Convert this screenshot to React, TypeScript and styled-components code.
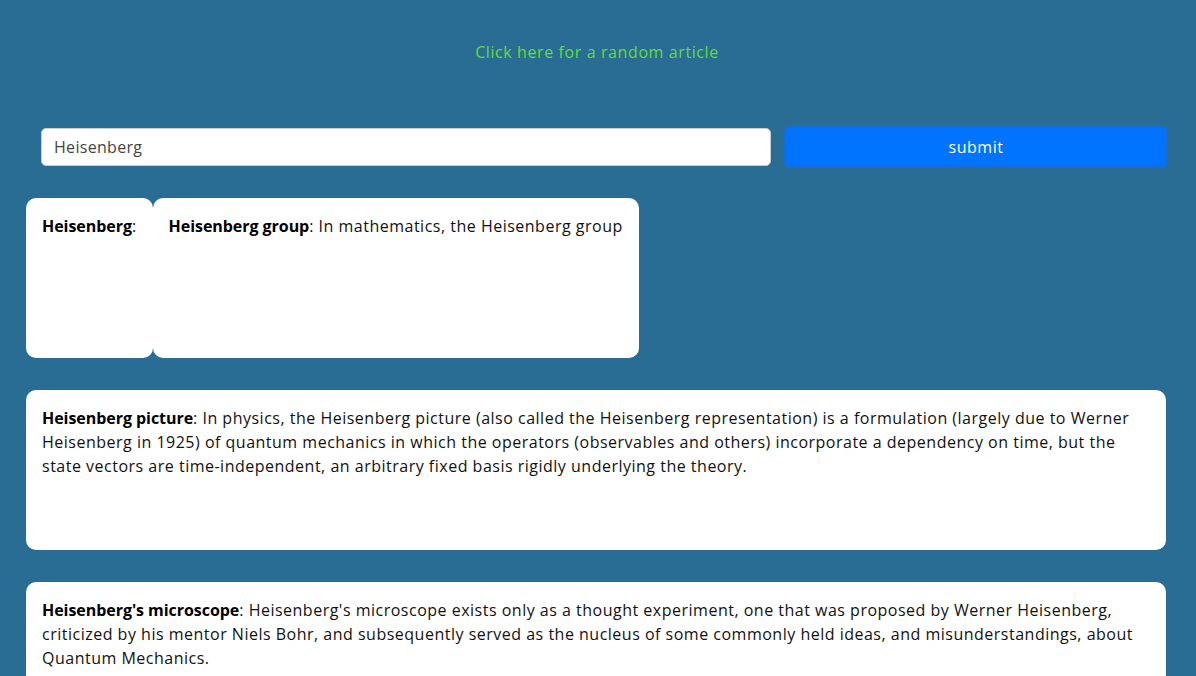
import React, { useState } from 'react';
import styled, { createGlobalStyle } from 'styled-components';

const GlobalStyle = createGlobalStyle`
  html, body {
    margin: 0;
    padding: 0;
    background-color: #2a6d94;
  }
  body {
    font-family: "Open Sans", "Liberation Sans", sans-serif;
    min-height: 676px;
  }
`;

const Page = styled.div`
  padding: 0 28px 0 26px;
`;

const RandomLink = styled.a`
  display: block;
  padding-top: 41px;
  height: 26px;
  text-align: center;
  color: #63dd3b;
  font-size: 16px;
  letter-spacing: 0.6px;
  text-decoration: none;
  cursor: pointer;
`;

const SearchForm = styled.form`
  display: flex;
  align-items: center;
  gap: 13px;
  margin: 59px 0 0 15px;
`;

const SearchInput = styled.input`
  flex: 0 0 730px;
  box-sizing: border-box;
  height: 38px;
  padding: 0 12px;
  border: 1px solid #c9ccd1;
  border-radius: 5px;
  background: #fff;
  color: #444;
  font-family: inherit;
  font-size: 16px;
  letter-spacing: 0.3px;
  outline: none;
`;

const SubmitButton = styled.button`
  flex: 1;
  box-sizing: border-box;
  height: 42px;
  border: 2px solid #1b6cd2;
  border-radius: 6px;
  background: #0073ff;
  color: #fff;
  font-family: inherit;
  font-size: 16px;
  letter-spacing: 0.5px;
  cursor: pointer;
`;

const Results = styled.div`
  margin-top: 30px;
  font-size: 16px;
`;

const Card = styled.div`
  display: inline-block;
  vertical-align: top;
  box-sizing: border-box;
  max-width: 1140px;
  height: 160px;
  margin-bottom: 32px;
  padding: 16px 16px;
  background: #fff;
  border-radius: 10px;
  color: #111;
  line-height: 24px;
  letter-spacing: 0.5px;
`;

const Row = styled.div`
  display: flex;
  align-items: flex-start;
`;

const Term = styled.b`
  font-weight: 700;
  color: #000;
  letter-spacing: -0.05px;
`;

type Article = { title: string; text: string };

const articles: Article[] = [
  {
    title: 'Heisenberg picture',
    text: 'In physics, the Heisenberg picture (also called the Heisenberg representation) is a formulation (largely due to Werner Heisenberg in 1925) of quantum mechanics in which the operators (observables and others) incorporate a dependency on time, but the state vectors are time-independent, an arbitrary fixed basis rigidly underlying the theory.',
  },
  {
    title: "Heisenberg's microscope",
    text: "Heisenberg's microscope exists only as a thought experiment, one that was proposed by Werner Heisenberg, criticized by his mentor Niels Bohr, and subsequently served as the nucleus of some commonly held ideas, and misunderstandings, about Quantum Mechanics.",
  },
];

const App: React.FC = () => {
  const [query, setQuery] = useState('Heisenberg');

  return <Page>
    <GlobalStyle />
    <RandomLink>Click here for a random article</RandomLink>
    <SearchForm onSubmit={(e) => e.preventDefault()}>
      <SearchInput type='text' value={query} onChange={({ target: { value } }) => setQuery(value)} />
      <SubmitButton type='submit'>submit</SubmitButton>
    </SearchForm>
    <Results>
      <Row>
        <Card><Term>Heisenberg</Term>:</Card>
        <Card><Term>Heisenberg group</Term>: In mathematics, the Heisenberg group</Card>
      </Row>
      {articles.map((a) => (
        <Card key={a.title}><Term>{a.title}</Term>: {a.text}</Card>
      ))}
    </Results>
  </Page>;
};

export default App;
